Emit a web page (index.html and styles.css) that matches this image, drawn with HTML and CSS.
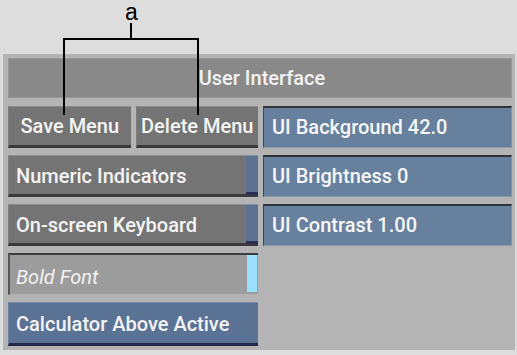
FILE: index.html
```html
<!DOCTYPE html>
<html lang="en">
<head>
  <meta charset="UTF-8">
  <title>User Interface</title>
  <link rel="stylesheet" href="styles.css">
</head>
<body>

  <!-- callout "a" over the menu buttons -->
  <div class="callout">
    <span class="callout-label">a</span>
    <svg class="callout-lines" width="517" height="130" viewBox="0 0 517 130">
      <path d="M64 115 V39 H198 V115 M131 39 V23" fill="none" stroke="#000" stroke-width="2"/>
    </svg>
  </div>

  <div class="panel">
    <div class="title-bar">User Interface</div>

    <div class="grid">
      <div class="col">
        <div class="pair">
          <div class="btn">Save Menu</div>
          <div class="btn">Delete Menu</div>
        </div>
        <div class="btn toggle">Numeric Indicators<span class="led"></span></div>
        <div class="btn toggle">On-screen Keyboard<span class="led"></span></div>
        <div class="btn toggle off">Bold Font<span class="led on"></span></div>
        <div class="btn active">Calculator Above Active</div>
      </div>

      <div class="col">
        <div class="field">UI Background 42.0</div>
        <div class="field">UI Brightness 0</div>
        <div class="field">UI Contrast 1.00</div>
      </div>
    </div>
  </div>

</body>
</html>
```

FILE: styles.css
```css
* {
  margin: 0;
  padding: 0;
  box-sizing: border-box;
}

body {
  width: 517px;
  height: 355px;
  background: #dddddd;
  font-family: Roboto, "Liberation Sans", Arial, sans-serif;
  font-weight: 500;
  overflow: hidden;
  position: relative;
  padding-top: 54px;
}

.callout {
  position: absolute;
  top: 0;
  left: 0;
  width: 517px;
  height: 130px;
  z-index: 3;
  pointer-events: none;
}

.callout-label {
  position: absolute;
  left: 125px;
  top: 1px;
  font-family: "Liberation Sans", Arial, sans-serif;
  font-weight: normal;
  font-size: 23px;
  line-height: 22px;
  color: #000;
}

.callout-lines {
  position: absolute;
  top: 0;
  left: 0;
}

.panel {
  margin-left: 3px;
  width: 512px;
  height: 296px;
  background: #b4b4b4;
  padding: 4px 3px 3px 5px;
}

.title-bar {
  height: 40px;
  background: #898989;
  border: 1px solid #969696;
  color: #f2f2f2;
  font-size: 20px;
  line-height: 38px;
  text-align: center;
  padding-left: 4px;
}

.grid {
  margin-top: 8px;
  display: grid;
  grid-template-columns: 250px 249px;
  column-gap: 5px;
}

.col {
  display: flex;
  flex-direction: column;
  gap: 7px;
}

.pair {
  display: flex;
  gap: 5px;
}

.pair .btn {
  flex: 1;
  padding-left: 0;
  text-align: center;
  line-height: 38px;
}

.btn {
  position: relative;
  height: 42px;
  background: #747474;
  border-top: 1px solid #8c8c8c;
  border-left: 1px solid #7e7e7e;
  border-bottom: 3px solid #3a3a3a;
  color: #f4f4f4;
  font-size: 20px;
  line-height: 41px;
  padding-left: 7px;
  white-space: nowrap;
}

.led {
  position: absolute;
  top: -1px;
  right: 0;
  width: 12px;
  height: 40px;
  background: #5d7291;
  border-top: 1px solid #7d8fa8;
  border-bottom: 3px solid #2c2f52;
}

.btn.off {
  background: #9c9c9c;
  border-top: 2px solid #3c3c3c;
  border-left: 2px solid #555555;
  border-bottom: 1px solid #b0b0b0;
  font-style: italic;
  font-weight: normal;
  color: #f2f2f2;
  padding-left: 6px;
  line-height: 44px;
}

.led.on {
  top: 0;
  right: 1px;
  width: 10px;
  height: 37px;
  background: #9ae1ff;
  border: none;
}

.btn.active {
  height: 44px;
  background: #5a7294;
  border-top: 1px solid #7b8fab;
  border-left: 1px solid #6a7f9e;
  border-bottom: 3px solid #252848;
  line-height: 43px;
}

.field {
  height: 42px;
  background: #66809d;
  border-top: 2px solid #2f3438;
  border-left: 1px solid #3d464f;
  border-right: 1px solid #8090a2;
  border-bottom: 1px solid #8a9aab;
  color: #f6f6f6;
  font-size: 20px;
  line-height: 38px;
  padding-left: 8px;
}
```
